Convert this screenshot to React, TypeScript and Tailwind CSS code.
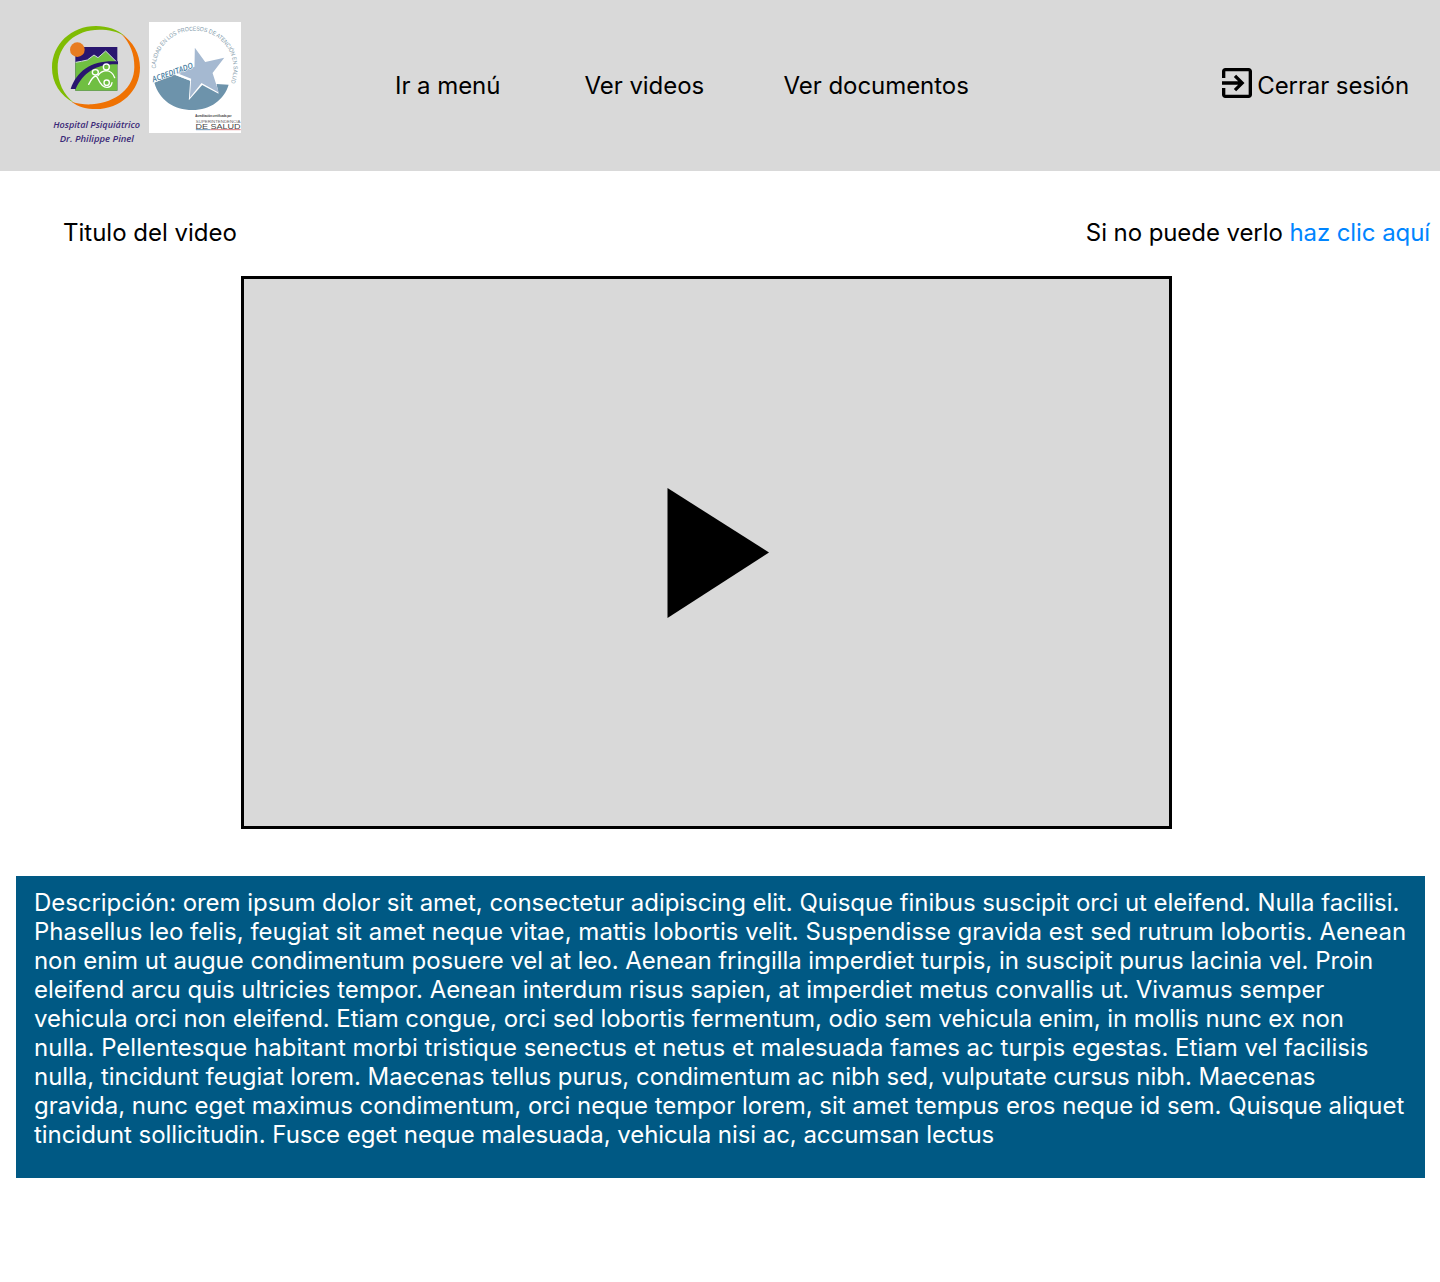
function HospitalLogo() {
  return (
    <svg className="h-[140px] w-[110px] shrink-0" viewBox="0 0 330 420" role="img" aria-label="Hospital Psiquiátrico Dr. Philippe Pinel">
      <path
        d="M103 264C60 242 36 202 36 158C36 88 94 33 168 33C202 33 232 43 256 64C232 49 206 44 178 44C106 44 53 92 53 158C53 201 70 239 103 264Z"
        fill="#7fbc03"
      />
      <path
        d="M243 56C280 79 300 117 300 158C300 228 241 282 168 282C140 282 116 276 94 260C116 267 136 269 156 268C228 263 283 218 283 156C283 116 271 84 243 56Z"
        fill="#ef7203"
      />
      <rect x="106" y="96" width="126" height="131" fill="#29166f" />
      <path d="M106 142L124 139L142 135L162 120L174 128L197 108L232 143V227H106Z" fill="#70bf42" />
      <path d="M107 142L124 139L142 135L162 120L174 128L197 108L232 143" fill="none" stroke="#cfd8dc" strokeWidth="3" />
      <path d="M92 222C112 164 158 134 234 139V148C170 146 130 172 107 222Z" fill="#29166f" />
      <circle cx="112" cy="104" r="22" fill="#e87c20" />
      <g fill="none" stroke="#fff" strokeWidth="4" strokeLinecap="round">
        <ellipse cx="166" cy="172" rx="9" ry="8" />
        <path d="M146 208C154 192 160 184 167 183C176 183 176 217 201 217C211 217 215 210 216 203" />
        <circle cx="199" cy="156" r="9" />
        <path d="M174 182C180 172 188 168 199 167C211 168 220 177 224 188" />
        <circle cx="200" cy="203" r="8" />
      </g>
      <g fill="#3b2a78" fontFamily="'Open Sans', sans-serif" fontStyle="italic" fontWeight="600" fontSize="27">
        <text x="40" y="338" textLength="260" lengthAdjust="spacingAndGlyphs">Hospital Psiquiátrico</text>
        <text x="59" y="382" textLength="223" lengthAdjust="spacingAndGlyphs">Dr. Philippe Pinel</text>
      </g>
    </svg>
  );
}

function AccreditationLogo() {
  return (
    <svg className="mt-[7px] -ml-px h-[111px] w-[92px] shrink-0" viewBox="27 21 275 333" preserveAspectRatio="none" role="img" aria-label="Acreditado">
      <rect x="27" y="21" width="275" height="333" fill="#fff" />
      <path id="seal-arc" d="M47 160A114 113 0 0 1 161 47A114 113 0 0 1 250 236" fill="none" />
      <text fill="#8199a9" fontFamily="'Liberation Sans', sans-serif" fontSize="18" textLength="405" lengthAdjust="spacingAndGlyphs">
        <textPath href="#seal-arc">CALIDAD EN LOS PROCESOS DE ATENCIÓN EN SALUD</textPath>
      </text>
      <path d="M43 203L100 178L150 197L146 256L186 210L235 236L229 207L265 209C252 254 210 285 157 285C101 285 58 255 43 203Z" fill="#6d93ab" />
      <path d="M164 98L195 141L252 128L217 174L236 233L184 204L149 248L153 191L108 173L163 155Z" fill="#a5b9d1" />
      <path d="M100 176L152 196" stroke="#fff" strokeWidth="3" />
      <text transform="translate(40 202) rotate(-20)" fill="#4a80a2" stroke="#fff" strokeWidth="3" paintOrder="stroke" fontFamily="'Open Sans', sans-serif" fontSize="24" fontWeight="600" fontStyle="italic" textLength="128" lengthAdjust="spacingAndGlyphs">
        ACREDITADO
      </text>
      <g fontFamily="'Liberation Sans', sans-serif">
        <text x="165" y="306" fontSize="9" fontWeight="700" fill="#333" textLength="109" lengthAdjust="spacingAndGlyphs">Acreditación certificada por</text>
        <text x="167" y="323" fontSize="12" fill="#666" textLength="133" lengthAdjust="spacingAndGlyphs">SUPERINTENDENCIA</text>
        <text x="166" y="341" fontSize="21" fill="#444" textLength="135" lengthAdjust="spacingAndGlyphs">DE SALUD</text>
      </g>
      <path d="M167 344H211" stroke="#6c93b5" strokeWidth="3" />
      <path d="M211 344H301" stroke="#d6797d" strokeWidth="3" />
    </svg>
  );
}

function ExitIcon() {
  return (
    <svg className="mt-[-5px] size-[40px] shrink-0" viewBox="0 0 24 24" aria-hidden="true">
      <path d="M10.09 15.59L11.5 17l5-5-5-5-1.41 1.41L12.67 11H3v2h9.67l-2.58 2.59zM19 3H5c-1.11 0-2 .9-2 2v4h2V5h14v14H5v-4H3v4c0 1.1.89 2 2 2h14c1.1 0 2-.9 2-2V5c0-1.1-.9-2-2-2z" />
    </svg>
  );
}

const description = [
  { text: "Descripción: orem ipsum dolor sit amet, consectetur adipiscing elit. Quisque finibus suscipit orci ut eleifend. Nulla facilisi.", tracking: "tracking-[-0.052px]" },
  { text: "Phasellus leo felis, feugiat sit amet neque vitae, mattis lobortis velit. Suspendisse gravida est sed rutrum lobortis. Aenean", tracking: "tracking-[0.02px]" },
  { text: "non enim ut augue condimentum posuere vel at leo. Aenean fringilla imperdiet turpis, in suscipit purus lacinia vel. Proin", tracking: "tracking-[-0.055px]" },
  { text: "eleifend arcu quis ultricies tempor. Aenean interdum risus sapien, at imperdiet metus convallis ut. Vivamus semper", tracking: "tracking-[-0.052px]" },
  { text: "vehicula orci non eleifend. Etiam congue, orci sed lobortis fermentum, odio sem vehicula enim, in mollis nunc ex non", tracking: "tracking-[-0.062px]" },
  { text: "nulla. Pellentesque habitant morbi tristique senectus et netus et malesuada fames ac turpis egestas. Etiam vel facilisis", tracking: "tracking-[0.003px]" },
  { text: "nulla, tincidunt feugiat lorem. Maecenas tellus purus, condimentum ac nibh sed, vulputate cursus nibh. Maecenas", tracking: "tracking-[-0.035px]" },
  { text: "gravida, nunc eget maximus condimentum, orci neque tempor lorem, sit amet tempus eros neque id sem. Quisque aliquet", tracking: "tracking-[-0.03px]" },
  { text: "tincidunt sollicitudin. Fusce eget neque malesuada, vehicula nisi ac, accumsan lectus", tracking: "tracking-[-0.047px]" },
];

export default function App() {
  return (
    <div className="min-h-[1282px] w-[1440px] bg-white font-['Inter',sans-serif] text-[24px] leading-[29px] text-black">
      <header className="flex h-[171px] items-center bg-[#d9d9d9]">
        <div className="flex h-full w-[395px] shrink-0 items-start pt-[15px] pl-10">
          <HospitalLogo />
          <AccreditationLogo />
        </div>
        <nav className="flex tracking-[-0.05px] whitespace-nowrap">
          <a className="w-[189.5px]">Ir a menú</a>
          <a className="w-[199px]">Ver videos</a>
          <a>Ver documentos</a>
        </nav>
        <a className="ml-auto flex items-center pr-[31px] tracking-[-0.09px] whitespace-nowrap">
          <ExitIcon />
          <span>Cerrar sesión</span>
        </a>
      </header>
      <main>
        <div className="flex justify-between pt-[47px] pr-[10px] pl-[63px]">
          <h1>Titulo del video</h1>
          <p className="tracking-[-0.08px]">
            Si no puede verlo <a className="text-[#0085ff]">haz clic aquí</a>
          </p>
        </div>
        <div className="mt-[29px] ml-[241px] flex h-[553px] w-[931px] items-center justify-center border-[3px] border-black bg-[#d9d9d9]">
          <svg className="ml-[23px] h-[130px] w-[102px]" viewBox="0 0 102 130" aria-label="Reproducir">
            <path d="M0.5 0L102 64.5L0.5 130Z" />
          </svg>
        </div>
        <p className="mt-[47px] ml-4 h-[302px] w-[1409px] bg-[#005984] pt-3 pl-[18px] whitespace-nowrap text-white">
          {description.map((line) => (
            <span key={line.text} className={`block ${line.tracking}`}>
              {line.text}{" "}
            </span>
          ))}
        </p>
      </main>
    </div>
  );
}
